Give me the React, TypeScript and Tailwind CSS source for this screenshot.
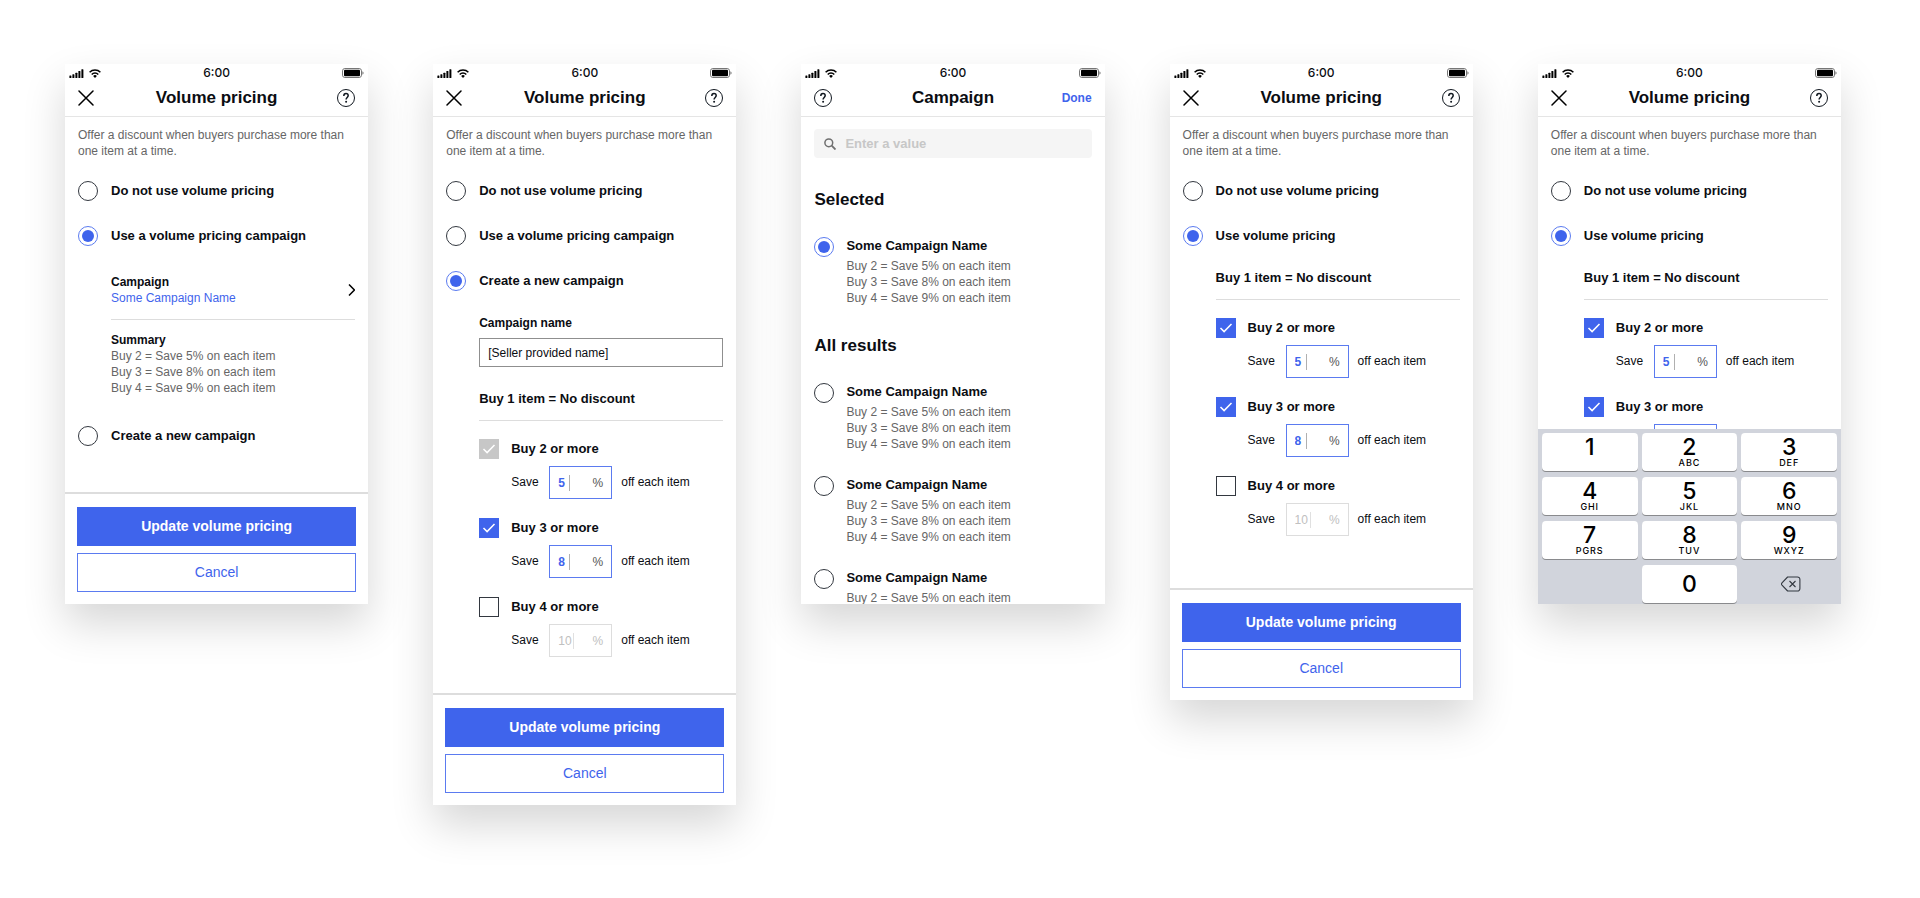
import type { ReactNode } from "react"

interface Tier {
  quantity: number
  value: string
  checked: boolean
  locked?: boolean
}

const newCampaignTiers: Tier[] = [
  { quantity: 2, value: "5", checked: true, locked: true },
  { quantity: 3, value: "8", checked: true },
  { quantity: 4, value: "10", checked: false },
]

const volumeTiers: Tier[] = [
  { quantity: 2, value: "5", checked: true },
  { quantity: 3, value: "8", checked: true },
  { quantity: 4, value: "10", checked: false },
]

const savings = [
  "Buy 2 = Save 5% on each item",
  "Buy 3 = Save 8% on each item",
  "Buy 4 = Save 9% on each item",
]

const keys = [
  { digit: "1", letters: "" },
  { digit: "2", letters: "ABC" },
  { digit: "3", letters: "DEF" },
  { digit: "4", letters: "GHI" },
  { digit: "5", letters: "JKL" },
  { digit: "6", letters: "MNO" },
  { digit: "7", letters: "PGRS" },
  { digit: "8", letters: "TUV" },
  { digit: "9", letters: "WXYZ" },
]

function StatusBar() {
  return (
    <div className="grid h-[18px] shrink-0 grid-cols-3 items-center px-1">
      <div className="flex items-center gap-[5px]">
        <svg width="15" height="9" viewBox="0 0 15 9" fill="#000">
          <rect x="0.4" y="6.4" width="2" height="2.6" rx="0.5" />
          <rect x="3.4" y="5.2" width="2" height="3.8" rx="0.5" />
          <rect x="6.4" y="3.8" width="2" height="5.2" rx="0.5" />
          <rect x="9.4" y="2" width="2" height="7" rx="0.5" />
          <rect x="12.4" y="0.2" width="2" height="8.8" rx="0.5" />
        </svg>
        <svg width="12" height="9" viewBox="0 0 12 9" fill="none" stroke="#000" strokeWidth="1.5">
          <path d="M0.6 3.3a7.6 7.6 0 0 1 10.8 0" />
          <path d="M2.7 5.5a4.6 4.6 0 0 1 6.6 0" />
          <path d="M6 8.9 4.1 7a2.7 2.7 0 0 1 3.8 0z" fill="#000" stroke="none" />
        </svg>
      </div>
      <span className="text-center font-['Inter',sans-serif] text-xs font-medium leading-4">6:00</span>
      <svg className="justify-self-end" width="22" height="10" viewBox="0 0 22 10">
        <rect x="0.5" y="0.5" width="19" height="9" rx="2.4" fill="none" stroke="#777" />
        <rect x="2" y="1.8" width="16" height="6.4" rx="1" fill="#000" />
        <path d="M20.4 3.2c1.6.6 1.6 3 0 3.6z" fill="#777" />
      </svg>
    </div>
  )
}

function HelpButton() {
  return (
    <button type="button" aria-label="Help" className="flex">
      <svg width="18" height="18" viewBox="0 0 18 18" fill="none" stroke="#111820">
        <circle cx="9" cy="9" r="8.5" />
        <path d="M6.8 6.9c0-1.6 1-2.5 2.2-2.5s2.2.8 2.2 2.2c0 1.8-2.1 1.9-2.1 4" strokeWidth="1.5" />
        <circle cx="9.1" cy="12.8" r="1" fill="#111820" stroke="none" />
      </svg>
    </button>
  )
}

function CloseButton() {
  return (
    <button type="button" aria-label="Close" className="flex">
      <svg width="16" height="16" viewBox="0 0 16 16" fill="none" stroke="#000" strokeWidth="1.5" strokeLinecap="round">
        <path d="M1 1l14 14M15 1L1 15" />
      </svg>
    </button>
  )
}

function Header({ title, left, right }: { title: string; left: ReactNode; right: ReactNode }) {
  return (
    <header className="flex h-[35px] shrink-0 items-center border-b border-[#e5e5e5] px-[13px] pb-0.5">
      <div className="flex flex-1">{left}</div>
      <h1 className="text-[17px] font-bold leading-5">{title}</h1>
      <div className="flex flex-1 justify-end">{right}</div>
    </header>
  )
}

function Screen({ className = "", children }: { className?: string; children: ReactNode }) {
  return (
    <section
      className={`flex min-w-0 flex-1 flex-col overflow-hidden bg-white shadow-[0_20px_40px_rgba(0,0,0,0.16)] ${className}`}
    >
      <StatusBar />
      {children}
    </section>
  )
}

function PricingHeader() {
  return <Header title="Volume pricing" left={<CloseButton />} right={<HelpButton />} />
}

function Intro() {
  return (
    <p className="text-xs leading-4 text-[#666666]">
      Offer a discount when buyers purchase more than one item at a time.
    </p>
  )
}

function RadioInput({ id, name, checked }: { id: string; name: string; checked?: boolean }) {
  return (
    <input
      type="radio"
      id={id}
      name={name}
      defaultChecked={checked}
      className="size-5 shrink-0 appearance-none rounded-full border border-[#333840] bg-clip-content p-[3px] checked:border-[#5b7bf0] checked:bg-[#3f64ec]"
    />
  )
}

function RadioRow({ id, name, label, checked }: { id: string; name: string; label: string; checked?: boolean }) {
  return (
    <div className="flex items-center gap-[13px]">
      <RadioInput id={id} name={name} checked={checked} />
      <label htmlFor={id} className="text-[13px] font-bold leading-5">
        {label}
      </label>
    </div>
  )
}

function SavingsLines({ lines }: { lines: string[] }) {
  return (
    <div className="text-xs leading-4 text-[#666666]">
      {lines.map((line) => (
        <p key={line}>{line}</p>
      ))}
    </div>
  )
}

function CampaignOption({
  id,
  name,
  checked,
  lines = savings,
}: {
  id: string
  name: string
  checked?: boolean
  lines?: string[]
}) {
  return (
    <div className="flex gap-3">
      <RadioInput id={id} name={name} checked={checked} />
      <div>
        <label htmlFor={id} className="mb-[3px] block text-[13px] font-bold leading-[18px]">
          Some Campaign Name
        </label>
        <SavingsLines lines={lines} />
      </div>
    </div>
  )
}

function TierRow({ prefix, tier }: { prefix: string; tier: Tier }) {
  const checkId = `${prefix}-tier-${tier.quantity}`
  const valueId = `${prefix}-save-${tier.quantity}`

  return (
    <div>
      <div className="flex items-center gap-3">
        <span className="relative flex">
          <input
            type="checkbox"
            id={checkId}
            defaultChecked={tier.checked}
            disabled={tier.locked}
            className="peer size-5 appearance-none border border-[#333840] checked:border-[#3f64ec] checked:bg-[#3f64ec] disabled:border-[#c7c7c7] disabled:bg-[#c7c7c7]"
          />
          <svg
            className="pointer-events-none absolute inset-0 hidden peer-checked:block"
            width="20"
            height="20"
            viewBox="0 0 20 20"
            fill="none"
            stroke="#fff"
            strokeWidth="1.5"
          >
            <path d="M4.5 10l3.6 3.6L15.5 6" />
          </svg>
        </span>
        <label htmlFor={checkId} className="text-[13px] font-bold leading-5">
          Buy {tier.quantity} or more
        </label>
      </div>
      <div className="mt-[7px] flex items-center pl-8 text-xs">
        <label htmlFor={valueId} className="w-[38px] pb-0.5 leading-4">
          Save
        </label>
        <div
          className={`flex h-[33px] w-[63px] items-center border px-2 ${
            tier.checked ? "border-[#5b7bf0] text-[#3f64ec]" : "border-[#dddddd] text-[#c0c0c0]"
          }`}
        >
          <input
            id={valueId}
            type="text"
            defaultValue={tier.value}
            disabled={!tier.checked}
            className={tier.value.length > 1 ? "w-[15px] leading-4" : "w-[11px] font-bold leading-4"}
          />
          <span className={`h-4 w-px ${tier.checked ? "bg-[#b0b0b0]" : "bg-[#e0e0e0]"}`} />
          <span className={`ml-auto leading-4 ${tier.checked ? "text-[#555555]" : ""}`}>%</span>
        </div>
        <span className="ml-[9px] pb-0.5 leading-4">off each item</span>
      </div>
    </div>
  )
}

function TierList({ prefix, tiers }: { prefix: string; tiers: Tier[] }) {
  return (
    <>
      <p className="text-[13px] font-bold leading-5">Buy 1 item = No discount</p>
      <hr className="mb-[18px] mt-[11px] border-[#dddddd]" />
      <div className="flex flex-col gap-[19px]">
        {tiers.map((tier) => (
          <TierRow key={tier.quantity} prefix={prefix} tier={tier} />
        ))}
      </div>
    </>
  )
}

function Footer() {
  return (
    <footer className="flex flex-col gap-[7px] border-t-2 border-[#dddddd] px-3 pb-3 pt-[13px]">
      <button type="button" className="h-[39px] bg-[#3f64ec] pb-0.5 text-sm font-bold text-white">
        Update volume pricing
      </button>
      <button type="button" className="h-[39px] border border-[#5b7bf0] pb-0.5 text-sm text-[#3f64ec]">
        Cancel
      </button>
    </footer>
  )
}

function ExistingCampaignScreen() {
  return (
    <Screen>
      <PricingHeader />
      <div className="flex flex-col px-[13px] pb-[46px] pt-[10px]">
        <Intro />
        <div className="mt-[22px] flex flex-col gap-[25px]">
          <RadioRow id="existing-none" name="existing" label="Do not use volume pricing" />
          <RadioRow id="existing-use" name="existing" label="Use a volume pricing campaign" checked />
        </div>
        <div className="mb-[30px] mt-7 pl-[33px] text-xs leading-4">
          <a href="#campaign" className="flex items-center justify-between">
            <span>
              <span className="block font-bold">Campaign</span>
              <span className="block text-[#3f64ec]">Some Campaign Name</span>
            </span>
            <svg width="8" height="12" viewBox="0 0 8 12" fill="none" stroke="#000" strokeWidth="1.5">
              <path d="M2 0.5L7.4 6 2 11.5" />
            </svg>
          </a>
          <hr className="mb-3 mt-[13px] border-[#dddddd]" />
          <p className="font-bold">Summary</p>
          <SavingsLines lines={savings} />
        </div>
        <RadioRow id="existing-new" name="existing" label="Create a new campaign" />
      </div>
      <Footer />
    </Screen>
  )
}

function NewCampaignScreen() {
  return (
    <Screen>
      <PricingHeader />
      <div className="px-[13px] pb-9 pt-[10px]">
        <Intro />
        <div className="mt-[22px] flex flex-col gap-[25px]">
          <RadioRow id="new-none" name="new" label="Do not use volume pricing" />
          <RadioRow id="new-use" name="new" label="Use a volume pricing campaign" />
          <RadioRow id="new-create" name="new" label="Create a new campaign" checked />
        </div>
        <div className="mt-6 pl-[33px]">
          <label htmlFor="campaign-name" className="block text-xs font-bold leading-4">
            Campaign name
          </label>
          <input
            id="campaign-name"
            type="text"
            defaultValue="[Seller provided name]"
            className="mb-[22px] mt-[7px] block h-[29px] w-full border border-[#8f8f8f] px-2 text-xs"
          />
          <TierList prefix="new" tiers={newCampaignTiers} />
        </div>
      </div>
      <Footer />
    </Screen>
  )
}

function CampaignPickerScreen() {
  return (
    <Screen className="h-[540px]">
      <Header
        title="Campaign"
        left={<HelpButton />}
        right={
          <button type="button" className="text-xs font-bold text-[#3f64ec]">
            Done
          </button>
        }
      />
      <div className="px-[13px] pt-3">
        <div className="flex h-[29px] items-center gap-[9px] rounded bg-[#f5f5f5] px-[10px]">
          <svg width="12" height="12" viewBox="0 0 12 12" fill="none" stroke="#707070" strokeWidth="1.5">
            <circle cx="4.8" cy="4.8" r="3.9" />
            <path d="M7.7 7.7l3.8 3.8" strokeWidth="1.8" />
          </svg>
          <input
            type="search"
            aria-label="Enter a value"
            placeholder="Enter a value"
            className="min-w-0 flex-1 text-[13px] font-bold placeholder:text-[#c7c7c7]"
          />
        </div>
        <h2 className="mb-[27px] mt-8 text-[17px] font-bold leading-5">Selected</h2>
        <CampaignOption id="selected-campaign" name="campaign" checked />
        <h2 className="mb-[27px] mt-[30px] text-[17px] font-bold leading-5">All results</h2>
        <div className="flex flex-col gap-6">
          <CampaignOption id="result-1" name="campaign" />
          <CampaignOption id="result-2" name="campaign" />
          <CampaignOption id="result-3" name="campaign" lines={savings.slice(0, 1)} />
        </div>
      </div>
    </Screen>
  )
}

function VolumePricingBody({ prefix, tiers }: { prefix: string; tiers: Tier[] }) {
  return (
    <>
      <PricingHeader />
      <div className="min-h-0 flex-1 overflow-hidden px-[13px] pb-[52px] pt-[10px]">
        <Intro />
        <div className="mt-[22px] flex flex-col gap-[25px]">
          <RadioRow id={`${prefix}-none`} name={prefix} label="Do not use volume pricing" />
          <RadioRow id={`${prefix}-use`} name={prefix} label="Use volume pricing" checked />
        </div>
        <div className="mt-[22px] pl-[33px]">
          <TierList prefix={prefix} tiers={tiers} />
        </div>
      </div>
    </>
  )
}

function Keypad() {
  return (
    <div className="grid shrink-0 grid-cols-3 gap-x-1 gap-y-[6px] bg-[#d1d4dc] px-1 pb-px pt-1 font-['Inter',sans-serif] font-medium text-black">
      {keys.map((key) => (
        <button
          key={key.digit}
          type="button"
          className="flex h-[38px] flex-col items-center rounded bg-white pt-[3px] shadow-[0_1px_0_#898a8d]"
        >
          <span className="text-[23px] leading-[22px]">{key.digit}</span>
          <span className="text-[9px] leading-[10px] tracking-widest">{key.letters}</span>
        </button>
      ))}
      <button
        type="button"
        className="col-start-2 h-[38px] rounded bg-white text-[23px] leading-[22px] shadow-[0_1px_0_#898a8d]"
      >
        0
      </button>
      <button type="button" aria-label="Delete" className="flex items-center justify-center pl-1">
        <svg width="20" height="16" viewBox="0 0 20 16" fill="none" stroke="#333840" strokeWidth="1.1">
          <path d="M6.6 1h9.9a2.4 2.4 0 0 1 2.4 2.4v9.2a2.4 2.4 0 0 1-2.4 2.4H6.6L1 9.2c-.6-.7-.6-1.7 0-2.4z" strokeLinejoin="round" />
          <path d="M8.5 5l6 6M14.5 5l-6 6" />
        </svg>
      </button>
    </div>
  )
}

export default function App() {
  return (
    <main className="flex min-h-screen items-start gap-[65px] overflow-hidden bg-white pb-20 pl-[65px] pr-[79px] pt-16 font-['Liberation_Sans',Arial,sans-serif] text-[#0b0d12]">
      <ExistingCampaignScreen />
      <NewCampaignScreen />
      <CampaignPickerScreen />
      <Screen>
        <VolumePricingBody prefix="volume" tiers={volumeTiers} />
        <Footer />
      </Screen>
      <Screen className="h-[540px]">
        <VolumePricingBody prefix="keypad" tiers={volumeTiers.slice(0, 2)} />
        <Keypad />
      </Screen>
    </main>
  )
}
